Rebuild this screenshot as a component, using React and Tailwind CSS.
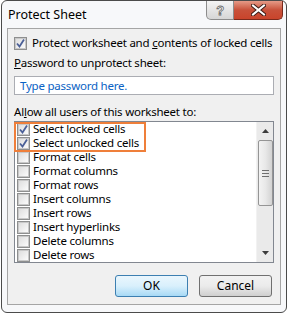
import React from 'react';

const font = { fontFamily: '"Noto Sans", "Open Sans", sans-serif' };

const Check = ({ checked }) => (
  <span className="w-[13px] h-[13px] border border-[#8e8f8f] bg-white flex items-center justify-center shrink-0">
    <span className="w-[11px] h-[11px] border border-[#c8c8c8] bg-gradient-to-br from-[#dedede] to-[#fbfbfb] flex items-center justify-center">
      {checked && (
        <svg width="9" height="9" viewBox="0 0 9 9">
          <path d="M1 4.5 L3.5 7.5 L8 0.5" fill="none" stroke="#4a5f97" strokeWidth="1.8" />
        </svg>
      )}
    </span>
  </span>
);

const items = [
  ['Select locked cells', true],
  ['Select unlocked cells', true],
  ['Format cells', false],
  ['Format columns', false],
  ['Format rows', false],
  ['Insert columns', false],
  ['Insert rows', false],
  ['Insert hyperlinks', false],
  ['Delete columns', false],
  ['Delete rows', false],
];

export default function App() {
  return (
    <div className="w-[288px] h-[314px] bg-white text-[11.5px] leading-[14px] tracking-[-0.22px] whitespace-nowrap text-black overflow-hidden" style={font}>
      <div className="ml-[1px] w-[286px] h-[313px] border border-[#4b4b4b] rounded-[6px] bg-[#f7f8fa] flex flex-col">
        {/* title bar */}
        <div className="h-[27px] flex items-start">
          <div className="pl-[6px] pt-[6px] text-[12.5px] leading-[16px] tracking-normal">Protect Sheet</div>
          <div className="ml-auto mr-[3px] flex">
            <div className="w-[28px] h-[19px] border border-t-0 border-[#8c8c8c] rounded-bl-[5px] bg-gradient-to-b from-[#f4f4f4] to-[#d6d6d6] flex items-center justify-center text-[13px] leading-none text-white" style={{ WebkitTextStroke: '0.8px #6a6a6a', fontFamily: '"Liberation Sans", sans-serif', fontWeight: 700 }}>
              ?
            </div>
            <div className="w-[49px] h-[19px] border border-l-0 border-t-0 border-[#7a2a1c] rounded-br-[5px] bg-gradient-to-b from-[#e59a87] via-[#c8513a] to-[#c9442b] flex items-center justify-center">
              <svg width="15" height="12" viewBox="0 0 15 12">
                <path d="M2 1.5 L13 10.5 M13 1.5 L2 10.5" stroke="#3a1a14" strokeWidth="4" strokeLinecap="square" />
                <path d="M2 1.5 L13 10.5 M13 1.5 L2 10.5" stroke="#ffffff" strokeWidth="2" strokeLinecap="square" />
              </svg>
            </div>
          </div>
        </div>
        {/* client panel */}
        <div className="ml-[5px] w-[274px] h-[277px] border border-[#a5a5a5] bg-[#f0f0f0] px-[6px] flex flex-col">
          <div className="mt-[7px] h-[14px] flex items-center">
            <Check checked />
            <span className="ml-[5px]">Protect worksheet and <u>c</u>ontents of locked cells</span>
          </div>
          <div className="mt-[6px] h-[14px] flex items-center"><span><u>P</u>assword to unprotect sheet:</span></div>
          <div className="mt-[6px] h-[19px] border border-[#abadb3] bg-white flex items-center px-[5px] text-[#0a62c4]">
            Type password here.
          </div>
          <div className="mt-[10px] h-[14px] flex items-center"><span>Al<u>l</u>ow all users of this worksheet to:</span></div>
          <div className="relative mt-[2px] h-[142px] border border-[#828790] bg-white flex">
            <div className="flex-1 flex flex-col">
              {items.map(([label, on]) => (
                <div key={label} className="h-[14px] flex items-center pl-[2px]">
                  <Check checked={on} />
                  <span className="ml-[3px]">{label}</span>
                </div>
              ))}
            </div>
            <div className="w-[17px] bg-[#eaeaea] border-l border-[#f2f2f2] flex flex-col items-center">
              <div className="h-[18px] w-full flex items-center justify-center">
                <svg width="7" height="4" viewBox="0 0 7 4"><path d="M3.5 0 L7 4 L0 4 Z" fill="#3c3c3c" /></svg>
              </div>
              <div className="w-[15px] h-[66px] border border-[#959595] rounded-[2px] bg-gradient-to-r from-[#f3f3f3] via-[#e8e8e8] to-[#d3d3d3] flex flex-col items-center justify-center gap-[2px]">
                <span className="w-[7px] h-[1px] bg-[#6f6f6f]" />
                <span className="w-[7px] h-[1px] bg-[#6f6f6f]" />
                <span className="w-[7px] h-[1px] bg-[#6f6f6f]" />
              </div>
              <div className="mt-auto h-[18px] w-full flex items-center justify-center">
                <svg width="7" height="4" viewBox="0 0 7 4"><path d="M0 0 L7 0 L3.5 4 Z" fill="#3c3c3c" /></svg>
              </div>
            </div>
            <div className="absolute left-[-1px] top-0 w-[132px] h-[30px] border-2 border-[#ef7f3a]" />
          </div>
          <div className="mt-[12px] flex justify-end gap-[11px] pr-[2px]">
            <button className="w-[73px] h-[22px] border border-[#3c7fb1] rounded-[3px] bg-gradient-to-b from-[#eaf6fd] via-[#d9f0fc] to-[#a7d9f5] text-[12px] tracking-normal">OK</button>
            <button className="w-[73px] h-[22px] border border-[#707070] rounded-[3px] bg-gradient-to-b from-[#f2f2f2] via-[#ebebeb] to-[#cfcfcf] text-[12px] tracking-normal">Cancel</button>
          </div>
        </div>
      </div>
    </div>
  );
}
